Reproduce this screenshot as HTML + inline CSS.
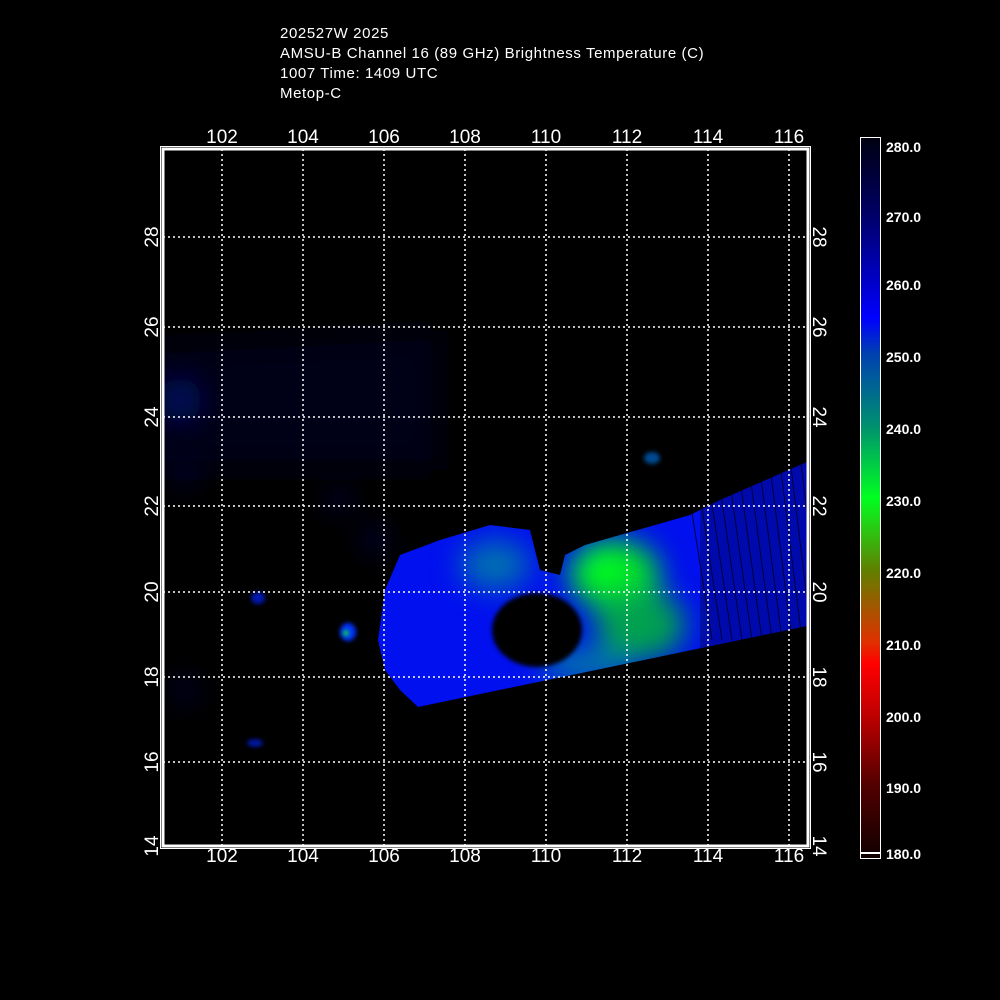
<!DOCTYPE html>
<html><head><style>
body{margin:0;background:#000;width:1000px;height:1000px;overflow:hidden;position:relative;font-family:"Liberation Sans",sans-serif;color:#fff}
.t{position:absolute;left:280px;font-size:15px;line-height:20px;top:24px;letter-spacing:0.6px}
</style></head><body>
<div class="t">202527W 2025<br>AMSU-B Channel 16 (89 GHz) Brightness Temperature (C)<br>1007 Time: 1409 UTC<br>Metop-C</div>
<svg width="1000" height="1000" style="position:absolute;left:0;top:0">
<defs>
<filter id="b" x="-20%" y="-20%" width="140%" height="140%"><feGaussianBlur stdDeviation="10"/></filter>
<filter id="b2" filterUnits="userSpaceOnUse" x="0" y="0" width="1000" height="1000"><feGaussianBlur stdDeviation="14"/></filter>
<filter id="b3" filterUnits="userSpaceOnUse" x="0" y="0" width="1000" height="1000"><feGaussianBlur stdDeviation="2"/></filter>
<clipPath id="sw"><polygon points="378,640 385,590 400,555 440,540 490,525 530,530 540,570 560,575 565,555 585,545 620,535 690,515 720,500 807,462 807,626 418,707 400,690 385,670"/></clipPath>
<clipPath id="pa"><rect x="163" y="149" width="644" height="696"/></clipPath>
<linearGradient id="cb" x1="0" y1="0" x2="0" y2="1">
<stop offset="0" stop-color="#000010"/><stop offset="0.1" stop-color="#000060"/><stop offset="0.2" stop-color="#0000c8"/><stop offset="0.25" stop-color="#0000ff"/><stop offset="0.3" stop-color="#0040b0"/><stop offset="0.4" stop-color="#009070"/><stop offset="0.5" stop-color="#00ff20"/><stop offset="0.6" stop-color="#608000"/><stop offset="0.7" stop-color="#e03000"/><stop offset="0.73" stop-color="#ff0000"/><stop offset="0.8" stop-color="#c00000"/><stop offset="0.9" stop-color="#500000"/><stop offset="1" stop-color="#100000"/>
</linearGradient>
</defs>
<g clip-path="url(#pa)">
<polygon points="150,345 440,330 440,470 150,470" fill="#000018" filter="url(#b2)"/>
<g filter="url(#b2)" fill="#000c60">
<ellipse cx="180" cy="400" rx="22" ry="22"/><ellipse cx="185" cy="475" rx="10" ry="8"/><ellipse cx="340" cy="500" rx="10" ry="8"/><ellipse cx="375" cy="540" rx="8" ry="12"/><ellipse cx="185" cy="690" rx="8" ry="10"/>
</g>
<ellipse cx="258" cy="598" rx="7" ry="6" fill="#0018b0" filter="url(#b3)"/>
<ellipse cx="255" cy="743" rx="8" ry="4" fill="#0018a0" filter="url(#b3)"/>
<ellipse cx="348" cy="632" rx="8" ry="9" fill="#0030ff" filter="url(#b3)"/>
<ellipse cx="346" cy="633" rx="3" ry="3" fill="#10e030" filter="url(#b3)"/>
<ellipse cx="652" cy="458" rx="8" ry="6" fill="#004890" filter="url(#b3)"/>
<g clip-path="url(#sw)">
<rect x="370" y="450" width="440" height="270" fill="#0010ee"/>
<g filter="url(#b2)">
<ellipse cx="615" cy="575" rx="45" ry="35" fill="#00e020"/>
<ellipse cx="600" cy="565" rx="25" ry="18" fill="#00ff20"/>
<ellipse cx="640" cy="625" rx="45" ry="35" fill="#00a050"/>
<ellipse cx="585" cy="665" rx="45" ry="15" fill="#0080a0"/>
<ellipse cx="495" cy="565" rx="35" ry="25" fill="#0070b0"/>
</g>
<g stroke="#000010" stroke-width="1" opacity="0.8">
<path d="M690,500 L712,640 M700,495 L722,640 M710,490 L732,640 M720,487 L742,640 M730,483 L752,640 M740,479 L762,640 M750,475 L772,640 M760,471 L782,640 M770,467 L792,640 M780,463 L802,640 M790,459 L812,640 M800,455 L822,640"/>
</g>
<rect x="700" y="450" width="110" height="200" fill="#000030" opacity="0.35"/>
</g>
<ellipse cx="537" cy="630" rx="45" ry="37" fill="#000" filter="url(#b3)"/>
</g>
<g stroke="#fff" stroke-width="1.5" stroke-dasharray="2,3" fill="none">
<path d="M222,149V845M303,149V845M384,149V845M465,149V845M546,149V845M627,149V845M708,149V845M789,149V845"/>
<path d="M163,237H807M163,327H807M163,417H807M163,506H807M163,592H807M163,677H807M163,762H807"/>
</g>
<rect x="160.5" y="146.5" width="650" height="702" fill="none" stroke="#fff" stroke-width="1"/>
<rect x="163" y="149" width="645" height="697" fill="none" stroke="#fff" stroke-width="3"/>
<g fill="#fff" font-family="Liberation Sans" font-size="19" text-anchor="middle">
<text x="222" y="143">102</text><text x="303" y="143">104</text><text x="384" y="143">106</text><text x="465" y="143">108</text><text x="546" y="143">110</text><text x="627" y="143">112</text><text x="708" y="143">114</text><text x="789" y="143">116</text>
<text x="222" y="862">102</text><text x="303" y="862">104</text><text x="384" y="862">106</text><text x="465" y="862">108</text><text x="546" y="862">110</text><text x="627" y="862">112</text><text x="708" y="862">114</text><text x="789" y="862">116</text>
</g>
<g fill="#fff" font-family="Liberation Sans" font-size="19" text-anchor="middle">
<text transform="translate(158,237) rotate(-90)">28</text><text transform="translate(158,327) rotate(-90)">26</text><text transform="translate(158,417) rotate(-90)">24</text><text transform="translate(158,506) rotate(-90)">22</text><text transform="translate(158,592) rotate(-90)">20</text><text transform="translate(158,677) rotate(-90)">18</text><text transform="translate(158,762) rotate(-90)">16</text><text transform="translate(158,846) rotate(-90)">14</text>
<text transform="translate(813,237) rotate(90)">28</text><text transform="translate(813,327) rotate(90)">26</text><text transform="translate(813,417) rotate(90)">24</text><text transform="translate(813,506) rotate(90)">22</text><text transform="translate(813,592) rotate(90)">20</text><text transform="translate(813,677) rotate(90)">18</text><text transform="translate(813,762) rotate(90)">16</text><text transform="translate(813,846) rotate(90)">14</text>
</g>
<rect x="860.5" y="137.5" width="20" height="721" fill="url(#cb)" stroke="#fff" stroke-width="1"/>
<rect x="861" y="852" width="19" height="2" fill="#fff"/>
<g fill="#fff" font-family="Liberation Sans" font-size="14" font-weight="bold">
<text x="886" y="152">280.0</text><text x="886" y="222">270.0</text><text x="886" y="290">260.0</text><text x="886" y="362">250.0</text><text x="886" y="434">240.0</text><text x="886" y="506">230.0</text><text x="886" y="578">220.0</text><text x="886" y="650">210.0</text><text x="886" y="722">200.0</text><text x="886" y="793">190.0</text><text x="886" y="859">180.0</text>
</g>
</svg>
</body></html>
